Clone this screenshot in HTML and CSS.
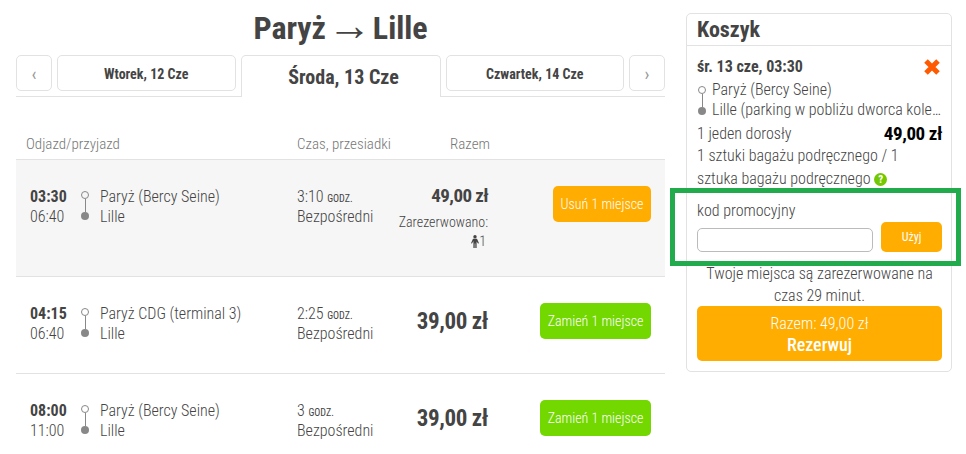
FILE: index.html
```html
<!DOCTYPE html>
<html lang="pl">
<head>
    <meta charset="UTF-8">
    <title>Paryż → Lille</title>
    <link rel="stylesheet" href="styles.css">
</head>
<body>
    <div class="page">
        <main class="results">
            <h1 class="route-title">Paryż <span class="arrow">→</span> Lille</h1>

            <div class="day-tabs">
                <a class="day-tab arrow-tab">‹</a>
                <a class="day-tab">Wtorek, 12 Cze</a>
                <a class="day-tab active">Środa, 13 Cze</a>
                <a class="day-tab">Czwartek, 14 Cze</a>
                <a class="day-tab arrow-tab">›</a>
            </div>

            <div class="list-head">
                <span class="col-times">Odjazd/przyjazd</span>
                <span class="col-duration">Czas, przesiadki</span>
                <span class="col-total">Razem</span>
            </div>

            <div class="ride selected">
                <div class="times"><b>03:30</b><span>06:40</span></div>
                <div class="stops-line"><i class="dot-open"></i><i class="dot-line"></i><i class="dot-full"></i></div>
                <div class="stops"><span>Paryż (Bercy Seine)</span><span>Lille</span></div>
                <div class="duration"><span>3:10 <small>GODZ.</small></span><span>Bezpośredni</span></div>
                <div class="price small-price">
                    <strong>49,00 zł</strong>
                    <p class="booked">Zarezerwowano:</p>
                    <p class="booked seats">
                        <svg width="10" height="13" viewBox="0 0 10 13"><circle cx="5" cy="1.7" r="1.7" fill="#444"/><path d="M3 3.800h4l2 4.400-1 .4-1.400-2.200V13H5.300V8.600H4.700V13H3.400V6L2 8.600l-1-.4z" fill="#444"/></svg>1
                    </p>
                </div>
                <div class="action"><button class="btn btn-orange">Usuń 1 miejsce</button></div>
            </div>

            <div class="ride">
                <div class="times"><b>04:15</b><span>06:40</span></div>
                <div class="stops-line"><i class="dot-open"></i><i class="dot-line"></i><i class="dot-full"></i></div>
                <div class="stops"><span>Paryż CDG (terminal 3)</span><span>Lille</span></div>
                <div class="duration"><span>2:25 <small>GODZ.</small></span><span>Bezpośredni</span></div>
                <div class="price"><strong>39,00 zł</strong></div>
                <div class="action"><button class="btn btn-green">Zamień 1 miejsce</button></div>
            </div>

            <div class="ride last">
                <div class="times"><b>08:00</b><span>11:00</span></div>
                <div class="stops-line"><i class="dot-open"></i><i class="dot-line"></i><i class="dot-full"></i></div>
                <div class="stops"><span>Paryż (Bercy Seine)</span><span>Lille</span></div>
                <div class="duration"><span>3 <small>GODZ.</small></span><span>Bezpośredni</span></div>
                <div class="price"><strong>39,00 zł</strong></div>
                <div class="action"><button class="btn btn-green">Zamień 1 miejsce</button></div>
            </div>
        </main>

        <aside class="cart">
            <h2 class="cart-title">Koszyk</h2>
            <div class="cart-body">
                <div class="cart-date">
                    <b>śr. 13 cze, 03:30</b>
                    <svg class="remove" width="18" height="18" viewBox="0 0 18 18"><path d="M3 3l12 12M15 3L3 15" stroke="#ff5a00" stroke-width="5"/></svg>
                </div>
                <div class="cart-route">
                    <div class="stops-line"><i class="dot-open"></i><i class="dot-line"></i><i class="dot-full"></i></div>
                    <div class="cart-stops"><span>Paryż (Bercy Seine)</span><span>Lille (parking w pobliżu dworca kolejowego)</span></div>
                </div>
                <div class="cart-price"><span>1 jeden dorosły</span><strong>49,00 zł</strong></div>
                <p class="cart-bags">1 sztuki bagażu podręcznego / 1 sztuka bagażu podręcznego <span class="help">?</span></p>
                <div class="promo">
                    <label class="promo-label">kod promocyjny</label>
                    <div class="promo-row">
                        <input class="promo-input" type="text">
                        <button class="btn btn-orange promo-btn">Użyj</button>
                    </div>
                </div>
                <p class="cart-note">Twoje miejsca są zarezerwowane na czas 29 minut.</p>
                <button class="btn btn-orange book-btn"><span>Razem: 49,00 zł</span><b>Rezerwuj</b></button>
            </div>
        </aside>
    </div>
    <div class="promo-highlight"></div>
</body>
</html>
```

FILE: styles.css
```css
* {
    padding: 0;
    margin: 0;
    box-sizing: border-box;
}

body {
    font-family: Roboto, "Liberation Sans", sans-serif;
    font-stretch: 75%;
    font-weight: 300;
    color: #444;
    background-color: #fff;
    overflow: hidden;
}

.page {
    display: flex;
    align-items: flex-start;
    gap: 21px;
    padding: 13px 14px 0 16px;
}

.results {
    width: 649px;
    flex-shrink: 0;
}

.route-title {
    font-size: 32px;
    line-height: 30px;
    font-weight: 700;
    text-align: center;
    color: #444;
}

.route-title .arrow {
    font-family: "Liberation Sans", sans-serif;
    font-size: 44px;
    line-height: 0;
    font-weight: 400;
    letter-spacing: -11px;
    margin-left: -6px;
    margin-right: 5px;
    vertical-align: -1px;
}

/* Day tabs */
.day-tabs {
    display: flex;
    gap: 5px;
    height: 42px;
    margin-top: 12px;
    border-bottom: 1px solid #e2e2e2;
}

.day-tab {
    flex: 1;
    height: 36px;
    padding-top: 1px;
    display: flex;
    align-items: center;
    justify-content: center;
    border: 1px solid #e2e2e2;
    border-radius: 5px;
    font-size: 14px;
    font-weight: 700;
}

.arrow-tab {
    flex: 0 0 36px;
    font-size: 18px;
    font-weight: 400;
    color: #999;
}

.day-tab.active {
    flex: 0 0 200px;
    height: 42px;
    padding: 1px 0 0 6px;
    border-bottom: 0;
    border-radius: 5px 5px 0 0;
    font-size: 20px;
    background-color: #fff;
}

/* List */
.list-head {
    display: flex;
    height: 62px;
    padding-top: 38px;
    font-size: 15px;
    line-height: 18px;
    color: #777;
}

.col-times {
    width: 281px;
    padding-left: 10px;
}

.col-duration {
    width: 125px;
}

.col-total {
    width: 68px;
    text-align: right;
}

.ride {
    display: flex;
    height: 96px;
    padding: 26px 14px 0;
    font-size: 16px;
    line-height: 20px;
}

.ride.selected {
    height: 118px;
    background-color: #f6f6f6;
    border-top: 1px solid #e2e2e2;
    border-bottom: 1px solid #e2e2e2;
}

.ride.last {
    height: 81px;
    border-top: 1px solid #e2e2e2;
}

.times,
.stops,
.duration,
.cart-stops {
    display: flex;
    flex-direction: column;
}

.times,
.stops,
.duration {
    margin-top: 1px;
}

.times {
    width: 50px;
}

.times b {
    font-weight: 700;
}

.stops-line {
    width: 10px;
    display: flex;
    flex-direction: column;
    align-items: center;
    padding-top: 5px;
}

.stops-line i {
    display: block;
}

.dot-open {
    width: 8px;
    height: 8px;
    border: 1px solid #888;
    border-radius: 50%;
}

.dot-line {
    width: 1px;
    height: 13px;
    background-color: #888;
}

.dot-full {
    width: 8px;
    height: 8px;
    border-radius: 50%;
    background-color: #888;
}

.stops {
    width: 207px;
    padding-left: 10px;
}

.duration {
    width: 100px;
}

.duration small {
    font-size: 10px;
    line-height: 1;
    font-weight: 400;
}

.price {
    width: 91px;
    text-align: right;
}

.price strong {
    display: block;
    font-size: 23px;
    line-height: 24px;
    font-weight: 700;
    letter-spacing: -0.4px;
    margin-top: 7px;
}

.small-price strong {
    font-size: 19px;
    letter-spacing: -0.6px;
    margin-top: -2px;
}

.booked {
    font-size: 14px;
    line-height: 19px;
}

.small-price strong + .booked {
    margin-top: 5px;
}

.seats {
    padding-right: 2px;
}

.seats svg {
    margin-right: -1px;
    vertical-align: -2px;
}

.action {
    flex: 1;
    display: flex;
    justify-content: flex-end;
}

.btn {
    border: 0;
    border-radius: 5px;
    color: #fff;
    font-family: inherit;
    font-stretch: inherit;
    font-weight: 300;
}

.btn-orange {
    background-color: #ffad00;
}

.btn-green {
    background-color: #73d700;
}

.ride .btn {
    height: 36px;
    padding: 0 7.5px;
    font-size: 14px;
}

/* Cart */
.cart {
    width: 266px;
    height: 359px;
    border: 1px solid #e2e2e2;
    border-radius: 5px;
}

.cart-title {
    height: 32px;
    padding-left: 10px;
    font-size: 22px;
    line-height: 31px;
    font-weight: 700;
    border-bottom: 1px solid #e2e2e2;
}

.cart-body {
    padding: 10px 9px 0 10px;
    font-size: 16px;
    line-height: 20px;
}

.cart-date {
    display: flex;
    justify-content: space-between;
    align-items: center;
    height: 22px;
}

.cart-date b {
    font-weight: 700;
}

.remove {
    margin-right: 1px;
}

.cart-route {
    display: flex;
    gap: 5px;
    margin-top: 2px;
}

.cart-route .stops-line {
    padding-top: 6px;
}

.cart-stops {
    min-width: 0;
    flex: 1;
}

.cart-stops span {
    white-space: nowrap;
    overflow: hidden;
    text-overflow: ellipsis;
}

.cart-price {
    display: flex;
    justify-content: space-between;
    align-items: center;
    margin-top: 2px;
    height: 23px;
}

.cart-price strong {
    font-size: 19px;
    font-weight: 700;
    letter-spacing: -0.4px;
    color: #000;
}

.cart-bags {
    margin-top: -1px;
    line-height: 23px;
}

.help {
    display: inline-block;
    width: 13px;
    height: 13px;
    border-radius: 50%;
    background-color: #73c800;
    color: #fff;
    font-size: 11px;
    line-height: 13px;
    font-weight: 700;
    text-align: center;
    vertical-align: 1px;
}

.promo {
    margin-top: 11px;
}

.promo-label {
    display: block;
    line-height: 20px;
}

.promo-row {
    display: flex;
    gap: 8px;
    align-items: flex-end;
    margin-top: 1px;
}

.promo-input {
    flex: 1;
    min-width: 0;
    height: 24px;
    border: 1px solid #bbb;
    border-radius: 5px;
    background-color: #fff;
}

.promo-btn {
    width: 61px;
    height: 30px;
    font-size: 12px;
    font-weight: 400;
}

.cart-note {
    margin-top: 11px;
    text-align: center;
    line-height: 22px;
}

.book-btn {
    display: flex;
    flex-direction: column;
    align-items: center;
    justify-content: center;
    width: 100%;
    height: 55px;
    margin-top: -1px;
    font-size: 16px;
    line-height: 21px;
}

.book-btn b {
    font-size: 18px;
    font-weight: 500;
}

/* Green frame over the promo block */
.promo-highlight {
    position: absolute;
    left: 670px;
    top: 188px;
    width: 291px;
    height: 78px;
    border: 5px solid #22ab4c;
}
```
